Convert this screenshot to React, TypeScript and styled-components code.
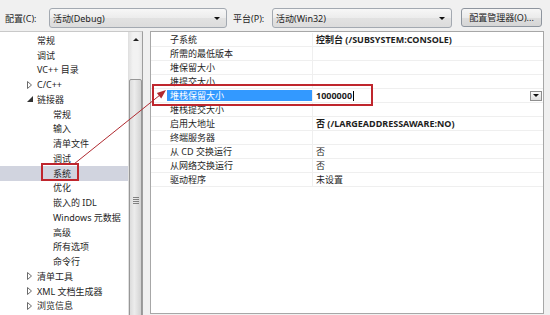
import React from "react";
import styled, { createGlobalStyle } from "styled-components";

const Global = createGlobalStyle`
  html, body { margin: 0; padding: 0; background: #f0f0f0; }
  body { font-family: "Noto Sans", "Noto Sans CJK SC", sans-serif; font-size: 9px; color: #1a1a1a; }
  * { box-sizing: border-box; }
`;

const Page = styled.div`
  position: relative;
  width: 550px;
  height: 315px;
  overflow: hidden;
  background: #f0f0f0;
`;

const TopBar = styled.div`
  height: 31px;
  display: flex;
  align-items: flex-start;
  padding-top: 8px;
`;

const Label = styled.div<{ $ml: number; $w: number }>`
  margin-left: ${(p) => p.$ml}px;
  width: ${(p) => p.$w}px;
  height: 20px;
  display: flex;
  align-items: center;
  white-space: nowrap;
  color: #1e1e1e;
`;

const Combo = styled.div<{ $w: number }>`
  width: ${(p) => p.$w}px;
  height: 20px;
  border: 1px solid #a3a9b1;
  border-radius: 3px;
  background: linear-gradient(#f7f7f7, #ececec 50%, #e2e2e2 51%, #dcdcdc);
  display: flex;
  align-items: center;
  padding-left: 3px;
  padding-right: 6px;
  color: #1e1e1e;
`;

const ComboText = styled.span`
  flex: 1;
  white-space: nowrap;
`;

const Arrow = styled.span`
  width: 0;
  height: 0;
  border-left: 3px solid transparent;
  border-right: 3px solid transparent;
  border-top: 3px solid #111;
`;

const Button = styled.div`
  margin-left: 9px;
  width: 81px;
  height: 19px;
  border: 1px solid #8e959e;
  border-radius: 3px;
  background: linear-gradient(#f6f6f6, #ebebeb 50%, #dedede 51%, #d6d6d6);
  display: flex;
  align-items: center;
  justify-content: center;
  white-space: nowrap;
  color: #1e1e1e;
`;

const Body = styled.div`
  display: flex;
  height: 284px;
`;

const TreePanel = styled.div`
  width: 143px;
  height: 290px;
  background: #fff;
  border-top: 1px solid #c9c9c9;
  border-right: 1px solid #9d9d9d;
  display: flex;
`;

const TreeList = styled.div`
  flex: 1;
  padding-top: 1px;
`;

const TreeRow = styled.div<{ $level: number; $selected?: boolean }>`
  height: 14.75px;
  display: flex;
  align-items: center;
  padding-left: ${(p) => 24 + (p.$level - 1) * 16}px;
  background: ${(p) => (p.$selected ? "#d1d4df" : "transparent")};
  white-space: nowrap;
  color: #1e1e1e;
`;

const ExpanderBox = styled.span`
  width: 13px;
  height: 10px;
  display: flex;
  align-items: center;
  padding-left: 3px;
`;

const ScrollBar = styled.div`
  width: 14px;
  position: relative;
  background: linear-gradient(90deg, #e3e3e3, #f2f2f2 30%, #f2f2f2 70%, #e6e6e6);
  border-left: 1px solid #e0e0e0;
  display: flex;
  flex-direction: column;
  align-items: center;
`;

const UpArrow = styled.span`
  margin-top: 6px;
  width: 0;
  height: 0;
  border-left: 3px solid transparent;
  border-right: 3px solid transparent;
  border-bottom: 3px solid #222;
`;

const Thumb = styled.div`
  margin-top: 38px;
  width: 13px;
  height: 250px;
  border: 1px solid #979797;
  border-radius: 2px;
  background: linear-gradient(90deg, #dcdcdc, #ececec 40%, #e4e4e4 60%, #d2d2d2);
  display: flex;
  align-items: center;
  justify-content: center;
`;

const Grip = styled.div`
  width: 6px;
  height: 7px;
  background: repeating-linear-gradient(#555 0 1px, transparent 1px 2px);
  opacity: 0.7;
`;

const Grid = styled.div`
  margin-left: 7px;
  width: 394px;
  height: 283px;
  background: #fff;
  border: 1px solid #a7a7a7;
  padding-top: 1px;
`;

const GridRow = styled.div`
  height: 14px;
  display: flex;
  border-bottom: 1px solid #efefef;
`;

const NameCell = styled.div<{ $selected?: boolean }>`
  margin-left: 16px;
  width: 146px;
  border-right: 1px solid #efefef;
  display: flex;
  align-items: center;
  padding-left: 3px;
  white-space: nowrap;
  color: ${(p) => (p.$selected ? "#fff" : "#1e1e1e")};
  background: ${(p) => (p.$selected ? "#3399ff" : "transparent")};
  margin-top: ${(p) => (p.$selected ? "1px" : "0")};
  margin-bottom: ${(p) => (p.$selected ? "1px" : "0")};
`;

const ValueCell = styled.div<{ $bold?: boolean }>`
  flex: 1;
  display: flex;
  align-items: center;
  padding-left: 3px;
  white-space: nowrap;
  font-weight: ${(p) => (p.$bold ? 700 : 400)};
  color: #1e1e1e;
`;

const Caret = styled.span`
  width: 1px;
  height: 10px;
  background: #000;
  margin-left: 1px;
`;

const DropButton = styled.div`
  margin-left: auto;
  margin-right: 1px;
  width: 12px;
  height: 10px;
  border: 1px solid #8f8f8f;
  background: linear-gradient(#fafafa, #dedede);
  display: flex;
  align-items: center;
  justify-content: center;
`;

const RedBox = styled.div<{ $x: number; $y: number; $w: number; $h: number }>`
  position: absolute;
  left: ${(p) => p.$x}px;
  top: ${(p) => p.$y}px;
  width: ${(p) => p.$w}px;
  height: ${(p) => p.$h}px;
  border: 2px solid #bf262d;
  pointer-events: none;
`;

const Overlay = styled.svg`
  position: absolute;
  left: 0;
  top: 0;
  pointer-events: none;
`;

type TNode = { label: string; level: number; exp?: "closed" | "open"; selected?: boolean };

const tree: TNode[] = [
  { label: "常规", level: 1 },
  { label: "调试", level: 1 },
  { label: "VC++ 目录", level: 1 },
  { label: "C/C++", level: 1, exp: "closed" },
  { label: "链接器", level: 1, exp: "open" },
  { label: "常规", level: 2 },
  { label: "输入", level: 2 },
  { label: "清单文件", level: 2 },
  { label: "调试", level: 2 },
  { label: "系统", level: 2, selected: true },
  { label: "优化", level: 2 },
  { label: "嵌入的 IDL", level: 2 },
  { label: "Windows 元数据", level: 2 },
  { label: "高级", level: 2 },
  { label: "所有选项", level: 2 },
  { label: "命令行", level: 2 },
  { label: "清单工具", level: 1, exp: "closed" },
  { label: "XML 文档生成器", level: 1, exp: "closed" },
  { label: "浏览信息", level: 1, exp: "closed" },
];

type PRow = { name: string; value?: string; bold?: boolean; editing?: boolean };

const props: PRow[] = [
  { name: "子系统", value: "控制台 (/SUBSYSTEM:CONSOLE)", bold: true },
  { name: "所需的最低版本" },
  { name: "堆保留大小" },
  { name: "堆提交大小" },
  { name: "堆栈保留大小", value: "1000000", bold: true, editing: true },
  { name: "堆栈提交大小" },
  { name: "启用大地址", value: "否 (/LARGEADDRESSAWARE:NO)", bold: true },
  { name: "终端服务器" },
  { name: "从 CD 交换运行", value: "否" },
  { name: "从网络交换运行", value: "否" },
  { name: "驱动程序", value: "未设置" },
];

const Expander = ({ kind }: { kind?: "closed" | "open" }) => (
  <ExpanderBox>
    {kind === "closed" && (
      <svg width="5" height="8" viewBox="0 0 5 8">
        <path d="M0.5 0.5 L4.5 4 L0.5 7.5 Z" fill="#fff" stroke="#6b6b6b" strokeWidth="1" />
      </svg>
    )}
    {kind === "open" && (
      <svg width="6" height="6" viewBox="0 0 6 6">
        <path d="M6 0 L6 6 L0 6 Z" fill="#333" />
      </svg>
    )}
  </ExpanderBox>
);

export default function App() {
  return (
    <Page>
      <Global />
      <TopBar>
        <Label $ml={5} $w={44}>配置(C):</Label>
        <Combo $w={178}>
          <ComboText>活动(Debug)</ComboText>
          <Arrow />
        </Combo>
        <Label $ml={6} $w={39}>平台(P):</Label>
        <Combo $w={180}>
          <ComboText>活动(Win32)</ComboText>
          <Arrow />
        </Combo>
        <Button>配置管理器(O)...</Button>
      </TopBar>
      <Body>
        <TreePanel>
          <TreeList>
            {tree.map((n, i) => (
              <TreeRow key={i} $level={n.level} $selected={n.selected}>
                <Expander kind={n.exp} />
                {n.label}
              </TreeRow>
            ))}
          </TreeList>
          <ScrollBar>
            <UpArrow />
            <Thumb>
              <Grip />
            </Thumb>
          </ScrollBar>
        </TreePanel>
        <Grid>
          {props.map((r, i) => (
            <GridRow key={i}>
              <NameCell $selected={r.editing}>{r.name}</NameCell>
              <ValueCell $bold={r.bold}>
                {r.value}
                {r.editing && <Caret />}
                {r.editing && (
                  <DropButton>
                    <Arrow />
                  </DropButton>
                )}
              </ValueCell>
            </GridRow>
          ))}
        </Grid>
      </Body>
      <RedBox $x={152} $y={84} $w={221} $h={22} />
      <RedBox $x={41} $y={163} $w={38} $h={18} />
      <Overlay width="550" height="315" viewBox="0 0 550 315">
        <line x1="74" y1="164" x2="160" y2="95" stroke="#b02a30" strokeWidth="1" />
        <polygon points="166,90 161.2,98.4 156.8,92.9" fill="#b02a30" />
      </Overlay>
    </Page>
  );
}
